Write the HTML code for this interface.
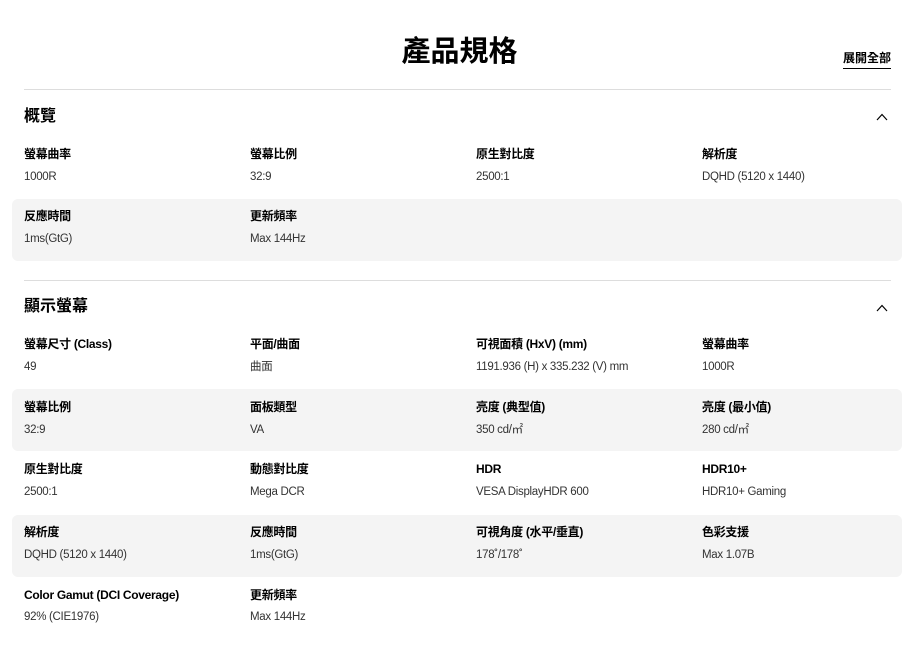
<!DOCTYPE html>
<html><head><meta charset="utf-8"><style>
*{margin:0;padding:0;box-sizing:border-box}
body{width:919px;height:653px;background:#fff;font-family:"Liberation Sans","Noto Sans CJK TC",sans-serif;color:#000;position:relative;overflow:hidden}
.a{position:absolute;white-space:nowrap}
.t{left:0;width:919px;text-align:center;top:33px;font-size:29px;font-weight:bold;line-height:38px}
.ex{left:843px;top:50px;font-size:12px;font-weight:bold;line-height:16px;border-bottom:1.5px solid #000;padding-bottom:2px}
.hr{position:absolute;left:24px;width:867px;height:1px;background:#ddd}
.h{font-size:16px;font-weight:bold;left:24px;line-height:20px}
.g{position:absolute;left:12px;width:890px;height:62px;background:#f4f4f4;border-radius:6px}
.l{font-size:12px;font-weight:bold;line-height:16px;letter-spacing:-0.3px}
.v{font-size:11.5px;line-height:16px;color:#333;letter-spacing:-0.3px}
.ch{position:absolute;left:876px;width:12px;height:8px}
</style></head><body>
<div class="a t">產品規格</div>
<div class="a ex">展開全部</div>
<div class="hr" style="top:89px"></div>
<div class="a h" style="top:107px">概覽</div>
<svg class="ch" style="top:113px" viewBox="0 0 12 8"><path d="M1 7L6 1.5L11 7" fill="none" stroke="#000" stroke-width="1.2"/></svg>
<div class="g" style="top:199px"></div>
<div class="hr" style="top:280px"></div>
<div class="a h" style="top:297px">顯示螢幕</div>
<svg class="ch" style="top:304px" viewBox="0 0 12 8"><path d="M1 7L6 1.5L11 7" fill="none" stroke="#000" stroke-width="1.2"/></svg>
<div class="g" style="top:389px"></div>
<div class="g" style="top:515px"></div>

<div class="a l" style="left:24px;top:146px">螢幕曲率</div><div class="a v" style="left:24px;top:169px">1000R</div>
<div class="a l" style="left:250px;top:146px">螢幕比例</div><div class="a v" style="left:250px;top:169px">32:9</div>
<div class="a l" style="left:476px;top:146px">原生對比度</div><div class="a v" style="left:476px;top:169px">2500:1</div>
<div class="a l" style="left:702px;top:146px">解析度</div><div class="a v" style="left:702px;top:169px">DQHD (5120 x 1440)</div>
<div class="a l" style="left:24px;top:208px">反應時間</div><div class="a v" style="left:24px;top:231px">1ms(GtG)</div>
<div class="a l" style="left:250px;top:208px">更新頻率</div><div class="a v" style="left:250px;top:231px">Max 144Hz</div>

<div class="a l" style="left:24px;top:336px">螢幕尺寸 (Class)</div><div class="a v" style="left:24px;top:359px">49</div>
<div class="a l" style="left:250px;top:336px">平面/曲面</div><div class="a v" style="left:250px;top:359px">曲面</div>
<div class="a l" style="left:476px;top:336px">可視面積 (HxV) (mm)</div><div class="a v" style="left:476px;top:359px">1191.936 (H) x 335.232 (V) mm</div>
<div class="a l" style="left:702px;top:336px">螢幕曲率</div><div class="a v" style="left:702px;top:359px">1000R</div>

<div class="a l" style="left:24px;top:399px">螢幕比例</div><div class="a v" style="left:24px;top:422px">32:9</div>
<div class="a l" style="left:250px;top:399px">面板類型</div><div class="a v" style="left:250px;top:422px">VA</div>
<div class="a l" style="left:476px;top:399px">亮度 (典型值)</div><div class="a v" style="left:476px;top:422px">350 cd/㎡</div>
<div class="a l" style="left:702px;top:399px">亮度 (最小值)</div><div class="a v" style="left:702px;top:422px">280 cd/㎡</div>

<div class="a l" style="left:24px;top:461px">原生對比度</div><div class="a v" style="left:24px;top:484px">2500:1</div>
<div class="a l" style="left:250px;top:461px">動態對比度</div><div class="a v" style="left:250px;top:484px">Mega DCR</div>
<div class="a l" style="left:476px;top:461px">HDR</div><div class="a v" style="left:476px;top:484px">VESA DisplayHDR 600</div>
<div class="a l" style="left:702px;top:461px">HDR10+</div><div class="a v" style="left:702px;top:484px">HDR10+ Gaming</div>

<div class="a l" style="left:24px;top:524px">解析度</div><div class="a v" style="left:24px;top:547px">DQHD (5120 x 1440)</div>
<div class="a l" style="left:250px;top:524px">反應時間</div><div class="a v" style="left:250px;top:547px">1ms(GtG)</div>
<div class="a l" style="left:476px;top:524px">可視角度 (水平/垂直)</div><div class="a v" style="left:476px;top:547px">178˚/178˚</div>
<div class="a l" style="left:702px;top:524px">色彩支援</div><div class="a v" style="left:702px;top:547px">Max 1.07B</div>

<div class="a l" style="left:24px;top:587px">Color Gamut (DCI Coverage)</div><div class="a v" style="left:24px;top:609px">92% (CIE1976)</div>
<div class="a l" style="left:250px;top:587px">更新頻率</div><div class="a v" style="left:250px;top:609px">Max 144Hz</div>
</body></html>
